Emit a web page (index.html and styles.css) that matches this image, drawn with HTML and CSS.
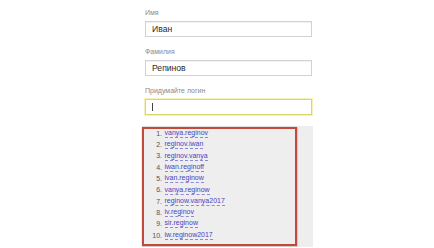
FILE: index.html
```html
<!DOCTYPE html>
<html lang="ru">
<head>
<meta charset="utf-8">
<link rel="stylesheet" href="styles.css">
</head>
<body>
<form class="form">
  <div class="field">
    <div class="label">Имя</div>
    <div class="input">Иван</div>
  </div>
  <div class="field">
    <div class="label">Фамилия</div>
    <div class="input">Репинов</div>
  </div>
  <div class="field">
    <div class="label">Придумайте логин</div>
    <div class="input input-focus"><span class="caret"></span></div>
  </div>
  <div class="panel">
    <ol class="logins">
      <li><span class="num">1.</span><a class="login">vanya.reginov</a></li>
      <li><span class="num">2.</span><a class="login">reginov.iwan</a></li>
      <li><span class="num">3.</span><a class="login">reginov.vanya</a></li>
      <li><span class="num">4.</span><a class="login">iwan.reginoff</a></li>
      <li><span class="num">5.</span><a class="login">ivan.reginow</a></li>
      <li><span class="num">6.</span><a class="login">vanya.reginow</a></li>
      <li><span class="num">7.</span><a class="login">reginow.vanya2017</a></li>
      <li><span class="num">8.</span><a class="login">iv.reginov</a></li>
      <li><span class="num">9.</span><a class="login">sir.reginow</a></li>
      <li><span class="num">10.</span><a class="login">iw.reginow2017</a></li>
    </ol>
    <div class="highlight"></div>
  </div>
</form>
</body>
</html>
```
FILE: styles.css
```css
html, body {
  margin: 0;
  background: #ffffff;
}
body {
  font-family: "Liberation Sans", Arial, sans-serif;
}
.form {
  width: 167px;
  padding: 8px 0 0 145px;
}
.field {
  margin-bottom: 10.5px;
}
.field:last-of-type {
  margin-bottom: 7px;
}
.label {
  font-size: 7px;
  line-height: 10px;
  height: 10px;
  color: #8a8a8a;
  margin-bottom: 2.5px;
}
.input {
  box-sizing: border-box;
  height: 16px;
  border: 1px solid #d2d2d2;
  box-shadow: inset 0 1px 1px rgba(0,0,0,0.06);
  font-size: 8.6px;
  line-height: 14px;
  padding-left: 6px;
  color: #2a2a2a;
  display: flex;
  align-items: center;
}
.input-focus {
  height: 16.5px;
  border: 1px solid #dcd56c;
  box-shadow: 0 0 0 1px #f6f1b8;
}
.caret {
  display: block;
  width: 1px;
  height: 8px;
  background: #444;
}
.panel {
  position: relative;
  margin-left: -3px;
  width: 171px;
  height: 121px;
  background: #eeeeee;
  box-sizing: border-box;
  padding-top: 2.4px;
}
.logins {
  list-style: none;
  margin: 0;
  padding: 0;
}
.logins li {
  display: grid;
  grid-template-columns: 20px auto;
  column-gap: 2.5px;
  height: 11.3px;
  line-height: 11.3px;
  font-size: 7px;
  align-items: center;
}
.num {
  text-align: right;
  color: #555555;
}
.login {
  justify-self: start;
  color: #4a43c2;
  line-height: 8px;
  border-bottom: 1px dashed #8e89d6;
}
.highlight {
  position: absolute;
  left: -0.5px;
  top: 1.3px;
  width: 155px;
  height: 119.5px;
  box-sizing: border-box;
  border: 2px solid #bf4a3d;
  box-shadow: 0 0 1.5px 0.5px rgba(90,30,20,0.55);
}
```
